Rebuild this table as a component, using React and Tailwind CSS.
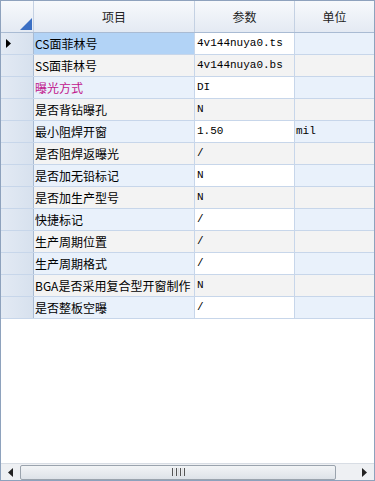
import React from "react";

const rows = [
  { name: "CS面菲林号", val: "4v144nuya0.ts", unit: "" },
  { name: "SS面菲林号", val: "4v144nuya0.bs", unit: "" },
  { name: "曝光方式", val: "DI", unit: "", pink: true },
  { name: "是否背钻曝孔", val: "N", unit: "" },
  { name: "最小阻焊开窗", val: "1.50", unit: "mil" },
  { name: "是否阻焊返曝光", val: "/", unit: "" },
  { name: "是否加无铅标记", val: "N", unit: "" },
  { name: "是否加生产型号", val: "N", unit: "" },
  { name: "快捷标记", val: "/", unit: "" },
  { name: "生产周期位置", val: "/", unit: "" },
  { name: "生产周期格式", val: "/", unit: "" },
  { name: "BGA是否采用复合型开窗制作", val: "N", unit: "" },
  { name: "是否整板空曝", val: "/", unit: "" },
];

const cjk = { fontFamily: '"Noto Sans CJK SC", "Liberation Sans", sans-serif' };
const mono = { fontFamily: '"Liberation Mono", "DejaVu Sans Mono", monospace' };

export default function App() {
  return (
    <div className="w-[375px] h-[481px] bg-white border border-[#8ea2bd] flex flex-col overflow-hidden box-border">
      {/* header */}
      <div className="flex h-[32px] shrink-0 bg-gradient-to-b from-[#f7f9fc] to-[#e4eaf3] border-b border-[#a9bbd3] text-[12px] text-[#222]" style={cjk}>
        <div className="w-[33px] shrink-0 border-r border-[#c4d1e3] relative">
          <svg className="absolute right-[1px] bottom-[2px]" width="12" height="12" viewBox="0 0 12 12">
            <polygon points="12,0 12,12 0,12" fill="#3b6fc4" />
          </svg>
        </div>
        <div className="w-[161px] shrink-0 border-r border-[#c4d1e3] flex items-center justify-center">项目</div>
        <div className="w-[100px] shrink-0 border-r border-[#c4d1e3] flex items-center justify-center">参数</div>
        <div className="flex-1 flex items-center justify-center">单位</div>
      </div>
      {/* rows */}
      <div className="flex-1 flex flex-col">
        {rows.map((r, i) => {
          const odd = i % 2 === 0;
          const c1 = i === 0 ? "bg-[#b2d3f6]" : odd ? "bg-[#e9f1fb]" : "bg-[#f3f3f3]";
          const c2 = odd ? "bg-white" : "bg-[#f3f3f3]";
          const c3 = odd ? "bg-[#e9f1fb]" : "bg-[#f3f3f3]";
          return (
            <div key={i} className="flex h-[22px] shrink-0 border-b border-[#c7d6ea]">
              <div className="w-[33px] shrink-0 bg-gradient-to-r from-[#e3eaf4] to-[#d7e1ee] border-r border-[#a9bbd3] flex items-center pl-[5px]">
                {i === 0 && (
                  <svg width="5" height="9" viewBox="0 0 5 9">
                    <polygon points="0,0 5,4.5 0,9" fill="#000" />
                  </svg>
                )}
              </div>
              <div
                className={`w-[161px] shrink-0 border-r border-[#c7d6ea] flex items-center pl-[1px] text-[12px] whitespace-nowrap overflow-hidden ${c1} ${r.pink ? "text-[#c0168c]" : "text-black"}`}
                style={cjk}
              >
                {r.name}
              </div>
              <div className={`w-[100px] shrink-0 border-r border-[#c7d6ea] flex items-center pl-[2px] text-[11px] text-black ${c2}`} style={mono}>
                {r.val}
              </div>
              <div className={`flex-1 flex items-center pl-[1px] text-[11px] text-black ${c3}`} style={mono}>
                {r.unit}
              </div>
            </div>
          );
        })}
      </div>
      {/* scrollbar */}
      <div className="h-[17px] shrink-0 flex items-center bg-[#eef0f3] border-t border-[#d8dde4]">
        <div className="w-[19px] h-full flex items-center justify-center">
          <svg width="5" height="9" viewBox="0 0 5 9">
            <polygon points="5,0 0,4.5 5,9" fill="#222" />
          </svg>
        </div>
        <div className="w-[316px] h-[15px] rounded-[2px] border border-[#9aa3ad] bg-gradient-to-b from-[#f2f4f6] to-[#dde2e8] flex items-center justify-center">
          <div className="flex gap-[1px]">
            <div className="w-[1px] h-[8px] bg-[#555]" />
            <div className="w-[1px] h-[8px] bg-[#ddd]" />
            <div className="w-[1px] h-[8px] bg-[#555]" />
            <div className="w-[1px] h-[8px] bg-[#ddd]" />
            <div className="w-[1px] h-[8px] bg-[#555]" />
            <div className="w-[1px] h-[8px] bg-[#ddd]" />
            <div className="w-[1px] h-[8px] bg-[#555]" />
          </div>
        </div>
        <div className="flex-1" />
        <div className="w-[19px] h-full flex items-center justify-center">
          <svg width="5" height="9" viewBox="0 0 5 9">
            <polygon points="0,0 5,4.5 0,9" fill="#222" />
          </svg>
        </div>
      </div>
    </div>
  );
}
